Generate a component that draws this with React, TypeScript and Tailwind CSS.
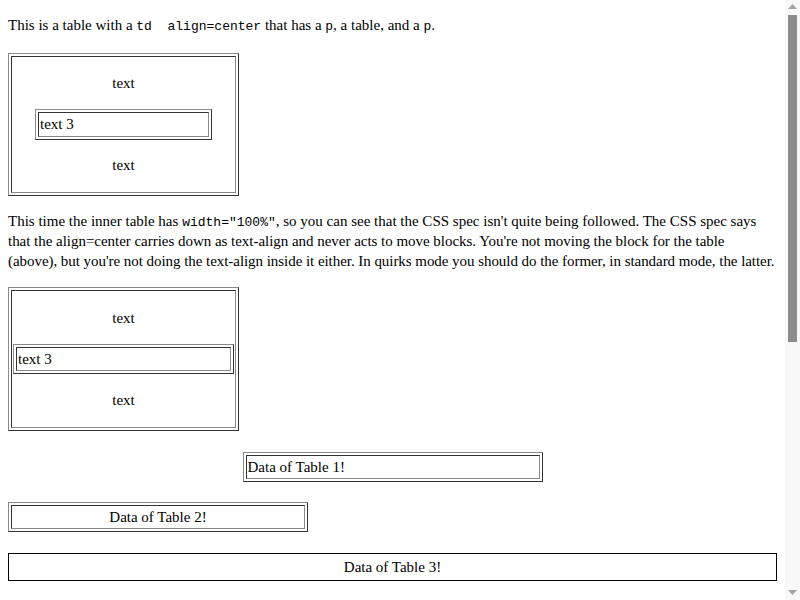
import React from "react";

function Outer({ className = "", children }: { className?: string; children: React.ReactNode }) {
  return (
    <div className={"border border-t-[#8a8a8a] border-l-[#8a8a8a] border-b-[#333333] border-r-[#333333] p-[2px] " + className}>
      <div className="border border-t-[#333333] border-l-[#333333] border-b-[#8a8a8a] border-r-[#8a8a8a] p-[1px]">
        {children}
      </div>
    </div>
  );
}

function Scrollbar() {
  return (
    <div className="w-[15px] h-[600px] shrink-0 bg-[#f8f8f8] flex flex-col items-center">
      <div className="h-[13px] w-full flex items-center justify-center">
        <svg width="9" height="5" viewBox="0 0 9 5">
          <polygon points="4.5,0 9,5 0,5" fill="#a3a3a3" />
        </svg>
      </div>
      <div className="mt-[2px] h-[327px] w-[9px] bg-[#8c8c8c]" />
      <div className="flex-1" />
      <div className="h-[15px] w-full flex items-center justify-center">
        <svg width="9" height="5" viewBox="0 0 9 5">
          <polygon points="0,0 9,0 4.5,5" fill="#a3a3a3" />
        </svg>
      </div>
    </div>
  );
}

const mono = "font-['Liberation_Mono',monospace] text-[13px] leading-[1]";

export default function App() {
  return (
    <div className="flex w-[800px] h-[600px] overflow-hidden bg-white">
      <div className="flex-1 min-w-0 h-[600px] overflow-hidden px-2 pt-4 font-['Liberation_Serif',serif] text-[15px] text-black leading-[19px]">
        <p className="mb-[18px] leading-[19px]">
          This is a table with a <code className={mono + " whitespace-pre"}>td  align=center</code> that has a{" "}
          <code className={mono}>p</code>, a table, and a <code className={mono}>p</code>.
        </p>

        <Outer className="w-[231px]">
          <div className="flex flex-col items-center">
            <p className="mt-4 mb-4 text-center">text</p>
            <Outer className="w-[177px]">
              <div className="text-left leading-[21px]">text 3</div>
            </Outer>
            <p className="mt-4 mb-4 text-center">text</p>
          </div>
        </Outer>

        <p className="mt-[15px] mb-4 leading-[20px] whitespace-nowrap">
          <span>
            This time the inner table has <code className={mono}>width="100%"</code>, so you can see that the CSS spec isn't
            quite being followed. The CSS spec says
          </span>
          <br />
          <span className="tracking-[-0.03px]">
            that the align=center carries down as text-align and never acts to move blocks. You're not moving the block for the
            table
          </span>
          <br />
          <span className="tracking-[-0.05px]">
            (above), but you're not doing the text-align inside it either. In quirks mode you should do the former, in standard
            mode, the latter.
          </span>
        </p>

        <Outer className="w-[231px]">
          <div className="flex flex-col">
            <p className="mt-4 mb-4 text-center leading-[20px]">text</p>
            <Outer className="w-full">
              <div className="text-left leading-[20px]">text 3</div>
            </Outer>
            <p className="mt-4 mb-4 text-center leading-[20px]">text</p>
          </div>
        </Outer>

        <div className="mt-[21px] flex justify-center">
          <Outer className="w-[300px]">
            <div className="text-left leading-[20px]">Data of Table 1!</div>
          </Outer>
        </div>

        <Outer className="mt-[20px] w-[300px]">
          <div className="text-center leading-[20px]">Data of Table 2!</div>
        </Outer>

        <div className="mt-[21px] border border-black text-center py-[3px] leading-[20px]">Data of Table 3!</div>
      </div>
      <Scrollbar />
    </div>
  );
}
